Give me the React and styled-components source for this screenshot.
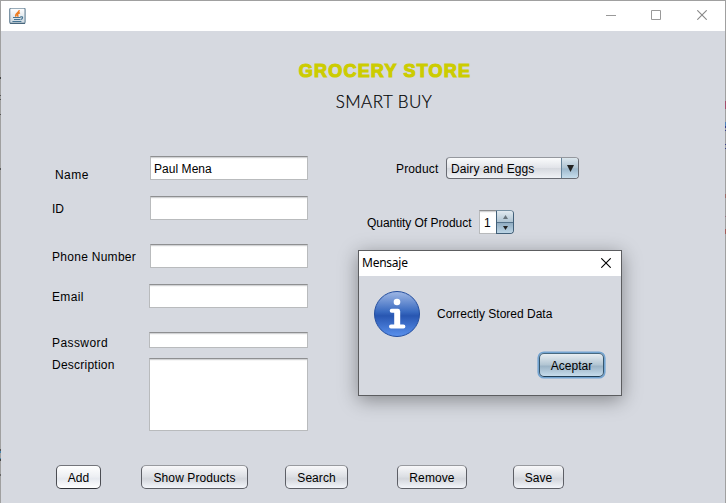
import React from "react";
import styled, { createGlobalStyle, css } from "styled-components";

const Global = createGlobalStyle`
  * { box-sizing: border-box; }
  html, body { margin: 0; padding: 0; overflow: hidden; background: #a0a0a0; }
  body { font: 12px/14px "Liberation Sans", Arial, sans-serif; color: #000; }
`;

const Frame = styled.div`
  width: 726px;
  height: 503px;
  display: grid;
  grid-template-columns: 1px 724px 1px;
  padding-top: 1px;
`;

const Edge = styled.div`
  background: linear-gradient(${(p) => p.$marks}) #a0a0a0;
`;

const Window = styled.div`
  display: flex;
  flex-direction: column;
  height: 502px;
  background: #d6d9e0;
  position: relative;
`;

const TitleBar = styled.header`
  height: 30px;
  flex: none;
  display: flex;
  align-items: center;
  justify-content: space-between;
  padding: 0 18px 0 8px;
  background: #fff;
`;

const WindowControls = styled.div`
  display: flex;
  align-items: center;
  padding-bottom: 2px;
  svg { display: block; }
  svg + svg { margin-left: 35px; }
  svg:nth-child(2) { margin-right: 1px; }
`;

const Heading = styled.div`
  height: 125px;
  padding: 29px 0 0 42px;
  text-align: center;
`;

const StoreName = styled.h1`
  margin: 0;
  padding-left: 2px;
  font: bold 18px/22px "Liberation Sans", Arial, sans-serif;
  letter-spacing: 1.2px;
  color: #cccc00;
  -webkit-text-stroke: 1.1px #cccc00;
`;

const Slogan = styled.h2`
  margin: 9px 0 0;
  font: 300 17px/22px Lato, sans-serif;
  letter-spacing: 0.45px;
  -webkit-text-stroke: 0.2px #000;
`;

const Main = styled.main`
  display: flex;
  height: 309px;
`;

const Form = styled.div`
  width: 307px;
  padding-left: 51px;
`;

const FieldRow = styled.div`
  display: flex;
  justify-content: space-between;
  margin-top: ${(p) => p.$gap || 0}px;
`;

const Label = styled.label`
  padding-top: ${(p) => p.$drop || 0}px;
  margin-left: ${(p) => p.$indent || 0}px;
  letter-spacing: ${(p) => p.$spacing || 0}px;
  white-space: nowrap;
  height: 0;
`;

const sunken = css`
  border: 1px solid #b9bbbd;
  border-top-color: #8e8f91;
  background: #fff;
  box-shadow: inset 0 1px #d2d3d5, inset 0 2px #f6f6f6;
`;

const Field = styled.div`
  ${sunken}
  flex: none;
  width: ${(p) => p.$width || 158}px;
  height: ${(p) => p.$height || 24}px;
  padding: 5px 4px 0 3px;
  letter-spacing: 0.05px;
`;

const Options = styled.div`
  flex: 1;
  padding-top: 1px;
`;

const OptionRow = styled.div`
  display: flex;
  align-items: center;
  height: ${(p) => p.$height}px;
  margin-top: ${(p) => p.$gap || 0}px;
  padding-left: ${(p) => p.$indent}px;
`;

const OptionLabel = styled.label`
  width: ${(p) => p.$width}px;
  padding-top: 2px;
  letter-spacing: ${(p) => p.$spacing || 0}px;
  white-space: nowrap;
`;

const Combo = styled.div`
  display: flex;
  width: 133px;
  height: 22px;
  border: 1px solid #686b73;
  border-top-color: #95989e;
  border-radius: 4px;
  overflow: hidden;
  background: linear-gradient(#fafbfc, #e2e4e9 48%, #d6d9df 52%, #f0f2f6);
`;

const ComboValue = styled.span`
  flex: 1;
  padding: 4px 0 0 4px;
  letter-spacing: 0.1px;
`;

const ComboArrow = styled.span`
  width: 17px;
  display: grid;
  place-items: center;
  border-left: 1px solid #65839a;
  background: linear-gradient(#dce7ee, #aec3d2 50%, #9db8cc 54%, #c8deed);
`;

const SpinnerValue = styled.div`
  ${sunken}
  width: 17px;
  height: 24px;
  border-right: 0;
  padding: 5px 0 0 4px;
`;

const SpinnerButtons = styled.div`
  width: 18px;
  height: 24px;
  display: grid;
  grid-template-rows: 11px 11px;
  border: 1px solid #426079;
  border-top-color: #7892a4;
  border-radius: 0 4px 4px 0;
  overflow: hidden;
`;

const SpinnerStep = styled.span`
  display: grid;
  place-items: center;
  background: ${(p) => (p.$down ? "linear-gradient(#91adc2, #bcd5e6)" : "linear-gradient(#e1eaf0, #afc4d3)")};
  border-top: ${(p) => (p.$down ? "1px solid #56738b" : "0")};
`;

const Actions = styled.footer`
  display: flex;
  padding-left: 55px;
`;

const Button = styled.button`
  width: ${(p) => p.$width}px;
  height: 24px;
  margin: 0 ${(p) => p.$after || 0}px 0 0;
  padding: 1px 0 0;
  border: 1px solid #5d5f66;
  border-top-color: #989a9f;
  border-radius: 5px;
  font: inherit;
  color: #000;
  letter-spacing: ${(p) => p.$spacing || 0}px;
  background: linear-gradient(#f8f8fa, #dcdfe4 48%, #d3d6dc 58%, #f3f5fa);
  ${(p) => p.$hover && css`
    border-color: #73757b #4b4d53 #303238;
    background: linear-gradient(#fff, #edeff3 48%, #e6e9ef 58%, #fff);
  `}
  ${(p) => p.$primary && css`
    border-color: #476980 #36576f #213f57;
    box-shadow: 0 0 0 1.6px #73a4d1;
    background: linear-gradient(#e7edf1, #b3c6d3 48%, #9cb4c6 56%, #c6dcec);
  `}
`;

const Dialog = styled.section`
  position: absolute;
  left: 357px;
  top: 249px;
  width: 264px;
  height: 146px;
  border: 1px solid #5c5d60;
  background: #d6d9e0;
  box-shadow: 0 4px 18px rgba(0, 0, 0, 0.38);
`;

const DialogTitle = styled.header`
  height: 25px;
  display: flex;
  align-items: center;
  justify-content: space-between;
  padding: 0 10px 1px 3px;
  background: #fff;
  font: 12px/16px "Noto Sans", sans-serif;
  letter-spacing: -0.25px;
`;

const DialogContent = styled.div`
  display: flex;
  align-items: center;
  gap: 16px;
  padding: 14px 0 0 14px;
`;

const DialogActions = styled.div`
  display: flex;
  justify-content: flex-end;
  padding: 15px 17px 0 0;
`;

const Cross = ({ size = 10, color }) => (
  <svg width={size} height={size} viewBox="0 0 10 10">
    <path d="M.3.3l9.4 9.4M9.7.3L.3 9.7" stroke={color} strokeWidth="1.1" />
  </svg>
);

const Triangle = ({ up, width, height, color = "#222" }) => (
  <svg width={width} height={height} viewBox="0 0 8 7" preserveAspectRatio="none">
    <path d={up ? "M4 0L8 7H0z" : "M0 0h8L4 7z"} fill={color} />
  </svg>
);

const JavaIcon = () => (
  <svg width="17" height="17" viewBox="0 0 17 17">
    <defs>
      <linearGradient id="tile" x2="0" y2="1">
        <stop stopColor="#fff" />
        <stop offset="1" stopColor="#cbd7df" />
      </linearGradient>
    </defs>
    <rect x=".7" y=".2" width="15.4" height="15.2" rx="1.4" fill="url(#tile)" stroke="#7891a3" strokeWidth="1.3" />
    <path d="M1 15.4h15" stroke="#426278" />
    <path d="M10.2 2.2C10.6 4.7 5.2 5.3 7 8.7M11 4.7C8 5.6 7.8 7.2 9.4 8.6" fill="none" stroke="#ee7c21" strokeWidth="1.5" />
    <path d="M4 9.5h7.5M5 11.5h6M3.4 13.5h9M11.3 8.9c3.2-.9 2.8 2.2.2 2.7" fill="none" stroke="#467493" strokeWidth="1.2" />
  </svg>
);

const InfoIcon = () => (
  <svg width="48" height="48" viewBox="0 0 48 48">
    <defs>
      <linearGradient id="info" x2="0" y2="1">
        <stop stopColor="#a0b8e5" />
        <stop offset=".45" stopColor="#396ac0" />
        <stop offset=".54" stopColor="#2856b1" />
        <stop offset="1" stopColor="#5a91ed" />
      </linearGradient>
    </defs>
    <circle cx="24" cy="24" r="22.5" fill="url(#info)" stroke="#254f9f" />
    <circle cx="24" cy="12" r="3.3" fill="#fff" />
    <path d="M18.7 20.8h6.3v15.3M18 36.4h12.4" fill="none" stroke="#fff" strokeWidth="4" strokeLinecap="round" strokeLinejoin="round" />
    <path d="M24.2 21v15" stroke="#fff" strokeWidth="6" />
  </svg>
);

const fields = [
  { label: "Name", value: "Paul Mena", drop: 12, indent: 3, spacing: 0.45 },
  { label: "ID", gap: 16, drop: 6 },
  { label: "Phone Number", gap: 24, drop: 6, spacing: 0.28 },
  { label: "Email", gap: 16, drop: 6, spacing: 0.35, width: 159 },
  { label: "Password", gap: 24, drop: 4, spacing: 0.42, width: 159, height: 16 },
  { label: "Description", gap: 10, drop: 0, spacing: 0.24, width: 159, height: 73 },
];

const actions = [
  { label: "Add", width: 45, after: 40, hover: true },
  { label: "Show Products", width: 107, after: 37, spacing: 0.1 },
  { label: "Search", width: 63, after: 49, spacing: 0.05 },
  { label: "Remove", width: 70, after: 46, spacing: 0.1 },
  { label: "Save", width: 51 },
];

const leftMarks =
  "#a0a0a0 76px, #444 76px 78px, #a0a0a0 78px 94px, #555 94px 95px, #a0a0a0 95px 98px, #555 98px 99px, #a0a0a0 99px 113px, #555 113px 114px, #a0a0a0 114px 167px, #555 167px 169px, #a0a0a0 169px 448px, #555 448px 450px, #4684ad 450px 452px, #a0a0a0 452px 457px, #4684ad 457px 458px, #444 458px 460px, #a0a0a0 460px 473px, #666 473px 475px, #a0a0a0 475px";
const rightMarks =
  "#a0a0a0 100px, #a34e6b 100px 108px, #a0a0a0 108px 121px, #4e82b9 121px 125px, #383e89 125px 127px, #a0a0a0 127px 129px, #383e89 129px 130px, #a0a0a0 130px 143px, #383e89 143px 144px, #a0a0a0 144px 147px, #383e89 147px 148px, #a0a0a0 148px 193px, #9b6c68 193px 197px, #a0a0a0 197px 215px, #956f7f 215px 216px, #a0a0a0 216px 228px, #a55d59 228px 233px, #a0a0a0 233px";

export default function App() {
  return (
    <>
      <Global />
      <Frame>
        <Edge $marks={leftMarks} />
        <Window>
          <TitleBar>
            <JavaIcon />
            <WindowControls>
              <svg width="10" height="10"><path d="M0 5.5h10" stroke="#999" /></svg>
              <svg width="10" height="10"><path d="M.5.5h9v9h-9z" fill="none" stroke="#999" /></svg>
              <Cross color="#888" />
            </WindowControls>
          </TitleBar>
          <Heading>
            <StoreName>GROCERY STORE</StoreName>
            <Slogan>SMART BUY</Slogan>
          </Heading>
          <Main>
            <Form>
              {fields.map((f) => (
                <FieldRow key={f.label} $gap={f.gap}>
                  <Label $drop={f.drop} $indent={f.indent} $spacing={f.spacing}>{f.label}</Label>
                  <Field $width={f.width} $height={f.height}>{f.value}</Field>
                </FieldRow>
              ))}
            </Form>
            <Options>
              <OptionRow $height={22} $indent={88}>
                <OptionLabel $width={50} $spacing={0.15}>Product</OptionLabel>
                <Combo>
                  <ComboValue>Dairy and Eggs</ComboValue>
                  <ComboArrow><Triangle width={7} height={7} /></ComboArrow>
                </Combo>
              </OptionRow>
              <OptionRow $height={24} $gap={31} $indent={59}>
                <OptionLabel $width={112} $spacing={-0.05}>Quantity Of Product</OptionLabel>
                <SpinnerValue>1</SpinnerValue>
                <SpinnerButtons>
                  <SpinnerStep><Triangle up width={5} height={4} color="#68747c" /></SpinnerStep>
                  <SpinnerStep $down><Triangle width={5} height={4} /></SpinnerStep>
                </SpinnerButtons>
              </OptionRow>
            </Options>
          </Main>
          <Actions>
            {actions.map((a) => (
              <Button key={a.label} $width={a.width} $after={a.after} $spacing={a.spacing} $hover={a.hover}>
                {a.label}
              </Button>
            ))}
          </Actions>
          <Dialog>
            <DialogTitle>Mensaje<Cross color="#000" /></DialogTitle>
            <DialogContent>
              <InfoIcon />
              <span>Correctly Stored Data</span>
            </DialogContent>
            <DialogActions>
              <Button $width={65} $primary>Aceptar</Button>
            </DialogActions>
          </Dialog>
        </Window>
        <Edge $marks={rightMarks} />
      </Frame>
    </>
  );
}
